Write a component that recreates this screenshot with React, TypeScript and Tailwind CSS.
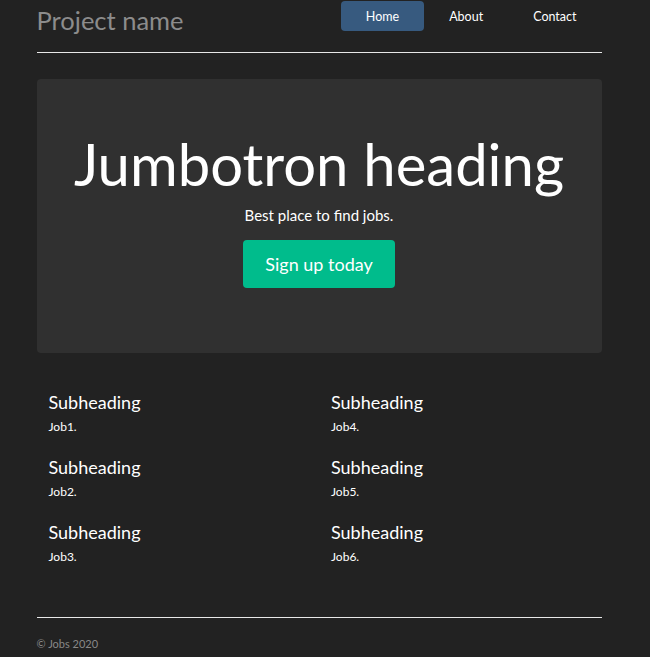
const jobs = [
  ['Job1.', 'Job4.'],
  ['Job2.', 'Job5.'],
  ['Job3.', 'Job6.'],
];

export default function App() {
  return (
    <div className="min-h-[657px] bg-[#222222] font-['Lato',sans-serif] text-white">
      <div className="mx-auto w-[565px] -translate-x-[6px]">
        {/* Header */}
        <header className="flex h-[53px] items-start justify-between border-b border-[#e8e8e8]">
          <h3 className="mt-[3px] text-[25.5px] leading-[34px] text-[#8c8c8c]">Project name</h3>
          <nav className="mt-[1px] flex text-[12.5px]">
            <a className="flex h-[30px] items-center rounded bg-[#375a7f] px-[25px] pt-[2px]">Home</a>
            <a className="flex h-[30px] items-center px-[25px] pt-[2px]">About</a>
            <a className="flex h-[30px] items-center px-[25px] pt-[2px]">Contact</a>
          </nav>
        </header>

        {/* Jumbotron */}
        <section className="mt-[26px] flex h-[274px] flex-col items-center rounded bg-[#303030] pt-[50px]">
          <h1 className="text-[58px] leading-[70px]">Jumbotron heading</h1>
          <p className="mt-[6px] text-[15px] leading-[20px]">Best place to find jobs.</p>
          <button className="mt-[15px] h-[48px] rounded bg-[#00bc8c] px-[22px] text-[18px] text-white">
            Sign up today
          </button>
        </section>

        {/* Jobs */}
        <div className="mt-[37px] grid grid-cols-2 gap-y-[21px]">
          {jobs.map((row) =>
            row.map((job) => (
              <div key={job} className="px-[12px]">
                <h4 className="text-[18px] leading-[24px]">Subheading</h4>
                <p className="mt-[6px] text-[12px] leading-[14px]">{job}</p>
              </div>
            )),
          )}
        </div>

        {/* Footer */}
        <footer className="mt-[53px] border-t border-[#e8e8e8] pt-[18px]">
          <p className="text-[11px] text-[#888888]">© Jobs 2020</p>
        </footer>
      </div>
    </div>
  );
}
